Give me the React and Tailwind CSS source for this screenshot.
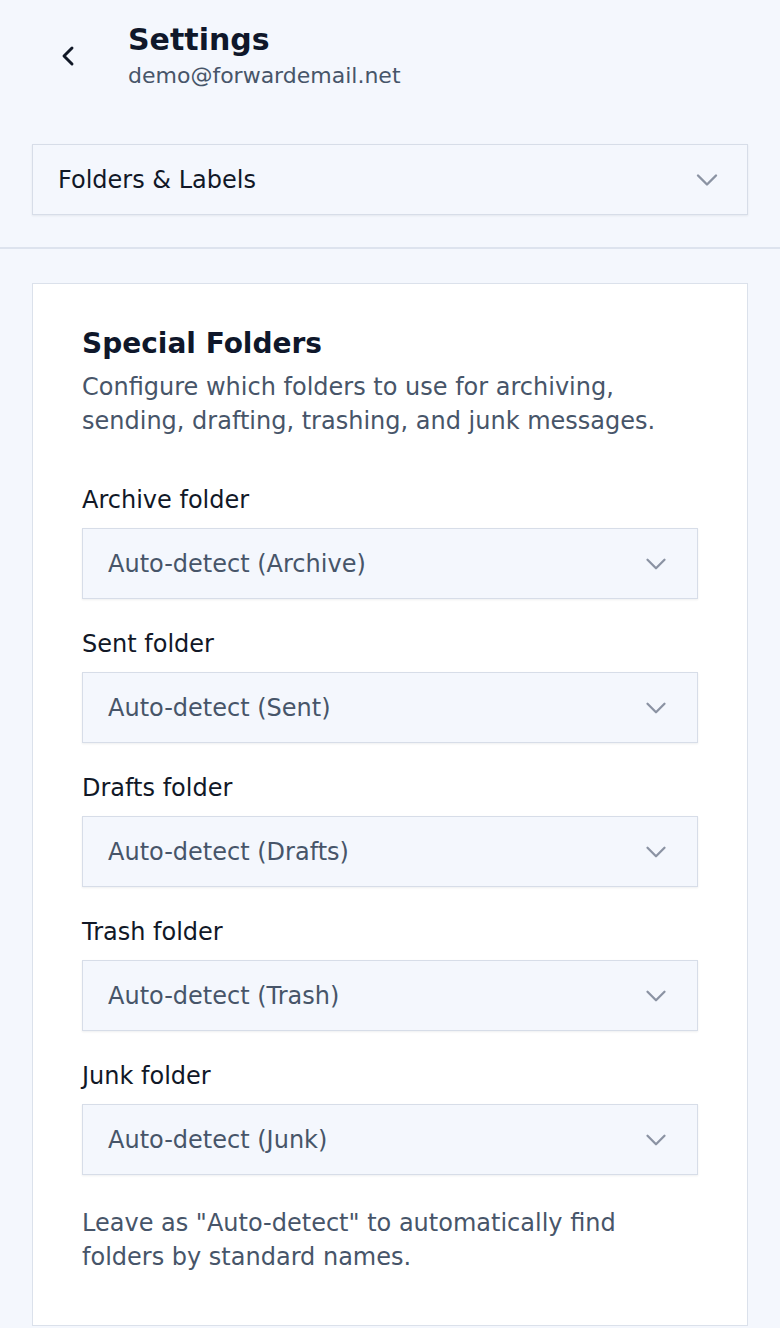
import React from "react";

const FOLDERS = [
  { label: "Archive folder", value: "Auto-detect (Archive)" },
  { label: "Sent folder", value: "Auto-detect (Sent)" },
  { label: "Drafts folder", value: "Auto-detect (Drafts)" },
  { label: "Trash folder", value: "Auto-detect (Trash)" },
  { label: "Junk folder", value: "Auto-detect (Junk)" },
];

function ChevronDown({ className = "" }) {
  return (
    <svg
      viewBox="0 0 24 24"
      fill="none"
      stroke="currentColor"
      strokeWidth="1.6"
      strokeLinecap="round"
      strokeLinejoin="round"
      className={className}
    >
      <path d="m6 9 6 6 6-6" />
    </svg>
  );
}

function SelectBox({ value }) {
  return (
    <div className="flex h-[71px] items-center justify-between border border-[#d7dde8] bg-[#f4f7fd] pl-[25px] pr-[24px] shadow-[0_1px_2px_rgba(15,23,42,0.07)]">
      <span className="text-[24px] leading-[32px] text-[#475569]">{value}</span>
      <ChevronDown className="h-[34px] w-[34px] text-[#8b93a3]" />
    </div>
  );
}

export default function App() {
  return (
    <div
      className="min-h-screen bg-[#f4f7fd] pb-10"
      style={{ fontFamily: '"DejaVu Sans", "Noto Sans", sans-serif' }}
    >
      {/* Header */}
      <div className="flex items-start pt-[22px]">
        <button className="ml-[52px] mt-[18px] flex h-8 w-8 items-center justify-center text-[#111827]">
          <svg
            viewBox="0 0 24 24"
            fill="none"
            stroke="currentColor"
            strokeWidth="2.2"
            strokeLinecap="round"
            strokeLinejoin="round"
            className="h-8 w-8"
          >
            <path d="m15 18-6-6 6-6" />
          </svg>
        </button>
        <div className="ml-[44px]">
          <h1 className="text-[30px] font-bold leading-[36px] text-[#0f172a]">Settings</h1>
          <p className="mt-1 text-[22px] leading-[28px] text-[#475569]">demo@forwardemail.net</p>
        </div>
      </div>

      {/* Section picker */}
      <div className="mx-8 mt-[54px]">
        <div className="flex h-[71px] items-center justify-between border border-[#d7dde8] bg-[#f4f7fd] pl-[25px] pr-[22px] shadow-[0_1px_2px_rgba(15,23,42,0.07)]">
          <span className="text-[24px] leading-[32px] text-[#111827]">Folders &amp; Labels</span>
          <ChevronDown className="h-[36px] w-[36px] text-[#8b93a3]" />
        </div>
      </div>

      <div className="mt-[32px] h-[2px] bg-[#dde3ee]" />

      {/* Card */}
      <div className="mx-8 mt-[34px] border border-[#dbe1eb] bg-white px-[49px] pb-[51px] pt-[42px]">
        <h2 className="text-[28px] font-bold leading-[36px] text-[#0f172a]">Special Folders</h2>
        <p className="mt-[8px] text-[24px] leading-[34px] text-[#475569]">
          Configure which folders to use for archiving, sending, drafting, trashing, and junk messages.
        </p>

        <div className="mt-[45px] flex flex-col gap-[28px]">
          {FOLDERS.map((f) => (
            <div key={f.label}>
              <label className="block text-[24px] leading-[34px] text-[#111827]">{f.label}</label>
              <div className="mt-[11px]">
                <SelectBox value={f.value} />
              </div>
            </div>
          ))}
        </div>

        <p className="mt-[31px] text-[24px] leading-[34px] text-[#475569]">
          Leave as "Auto-detect" to automatically find folders by standard names.
        </p>
      </div>
    </div>
  );
}
